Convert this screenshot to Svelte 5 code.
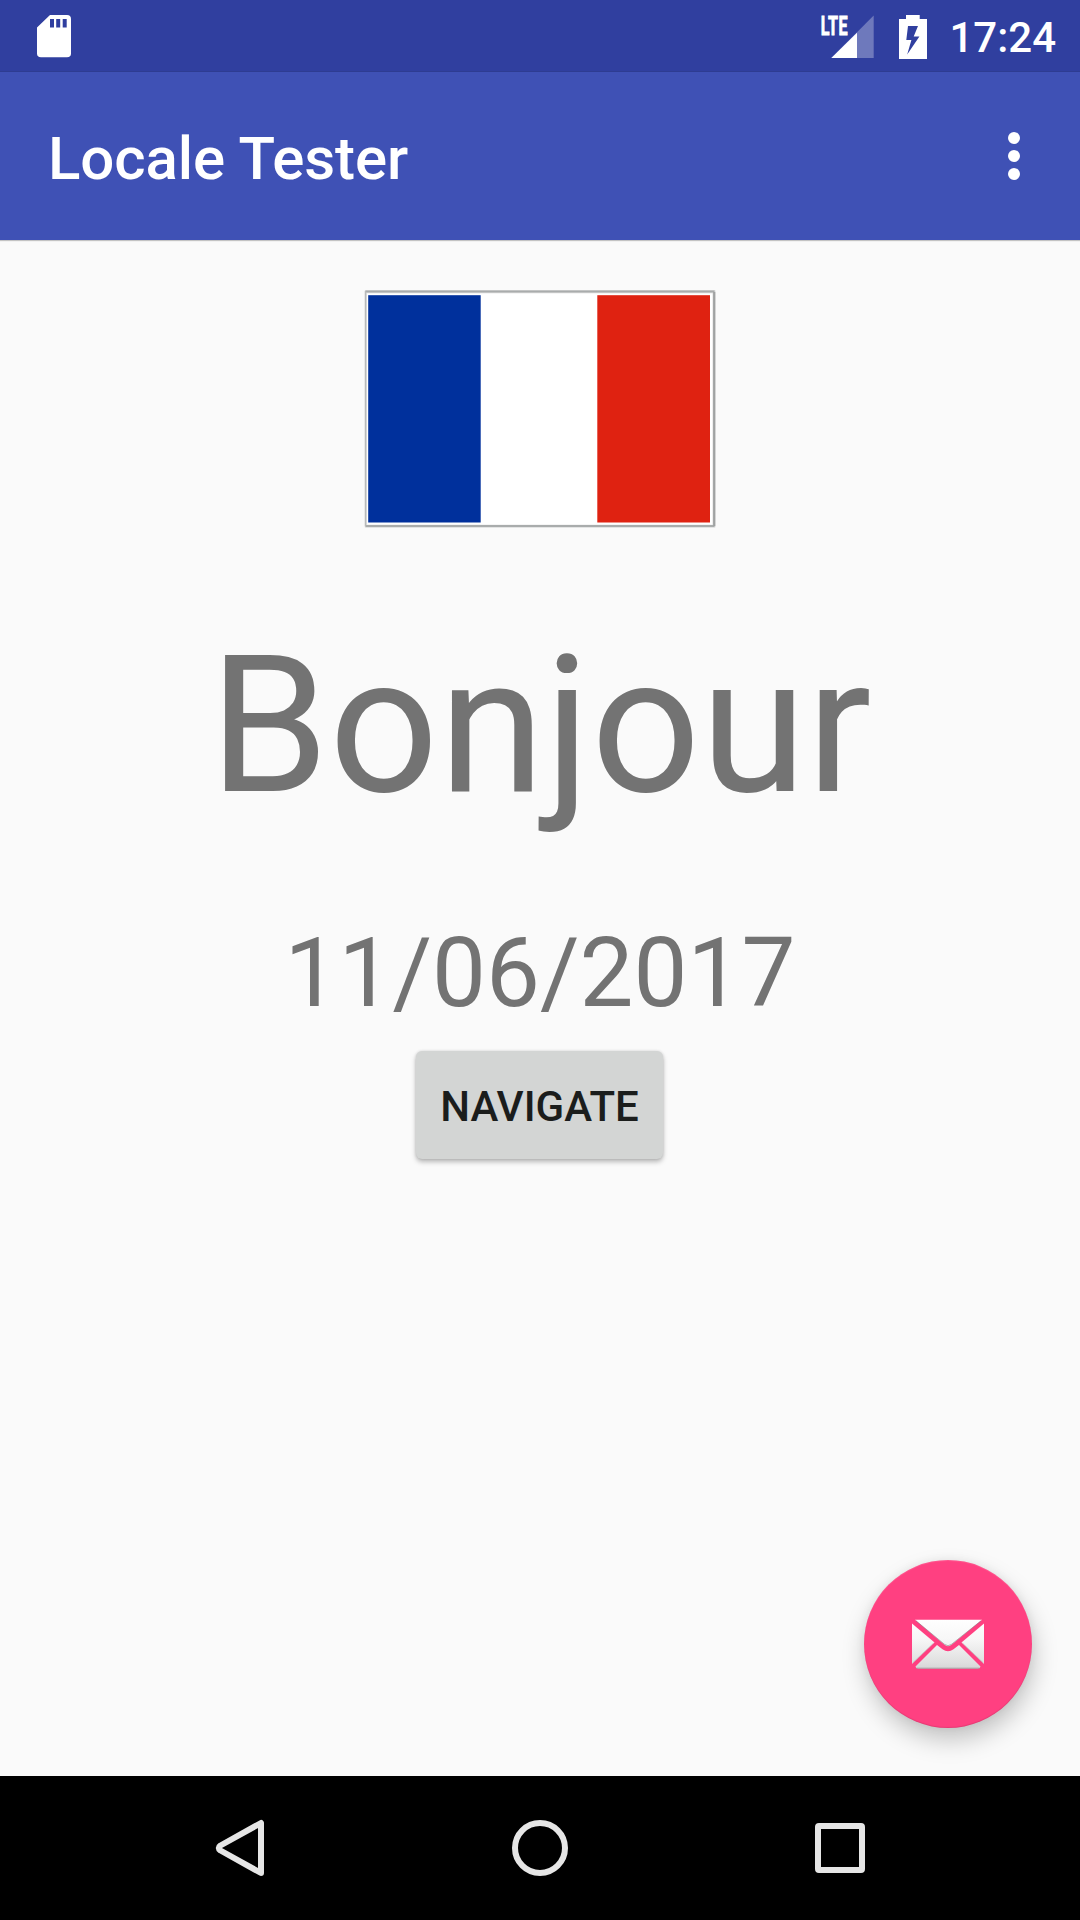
<script>
  const title = 'Locale Tester';
  const greeting = 'Bonjour';
  const date = '11/06/2017';
</script>

<div class="screen">
  <header class="status">
    <svg class="sd" width="34" height="42" viewBox="0 0 34 42" aria-hidden="true">
      <path fill="#fff" fill-rule="evenodd" d="M13 0H30Q34 0 34 4V38.500Q34 42.300 30 42.300H4Q0 42.300 0 38.500V12.500ZM13 4V12.500H17V4ZM19.200 4V12.500H23.200V4ZM25.700 4V12.500H29.700V4Z" />
    </svg>
    <div class="indicators">
      <svg class="signal" width="53" height="44" viewBox="0 0 53 44" aria-hidden="true">
        <path fill="#fff" fill-opacity=".3" d="M52.700 .5V43H10.300Z" />
        <path fill="#fff" d="M36 17.700V43H10.300Z" />
        <text class="lte" transform="translate(-.2 19.500) scale(.62 1)">LTE</text>
      </svg>
      <svg class="battery" width="28" height="44" viewBox="0 0 28 44" aria-hidden="true">
        <path fill="#fff" fill-rule="evenodd" d="M7 0H20.700V4H28V44H0V4H7ZM9 11L7.300 25H12.400L8.200 39.500L20.400 21.500H14.700L19 11Z" />
      </svg>
      <time class="clock">17:24</time>
    </div>
  </header>

  <div class="toolbar">
    <h1>{title}</h1>
    <button class="more" aria-label="More options">
      <i></i><i></i><i></i>
    </button>
  </div>

  <main>
    <svg class="flag" width="352" height="238" viewBox="0 0 352 238" role="img" aria-label="France">
      <rect x=".7" y="0" width="350.800" height="237.800" rx="1" fill="#dcdddd" />
      <path fill="none" stroke="#a9acac" stroke-width="2" d="M1.500 1.500H350.500M1.500 236H350.500" />
      <path stroke="#b8baba" stroke-width="1.300" d="M1.500 1V236" />
      <path stroke="#a0a2a2" stroke-width="2.200" d="M350.200 2V236" />
      <rect x="3" y="3.300" width="345.500" height="231.400" fill="#fff" />
      <rect x="4.200" y="5.200" width="112.500" height="227.300" fill="#00309c" />
      <rect x="233.300" y="5.200" width="112.700" height="227.300" fill="#df2211" />
    </svg>
    <p class="greeting">{greeting}</p>
    <p class="date">{date}</p>
    <button class="navigate">NAVIGATE</button>

    <button class="fab" aria-label="Send mail">
      <svg width="72" height="50" viewBox="0 0 72 50" aria-hidden="true">
        <defs>
          <linearGradient id="paper" x1="0" y1="0" x2="0" y2="50" gradientUnits="userSpaceOnUse">
            <stop offset="0" stop-color="#fff" />
            <stop offset=".4" stop-color="#f7f7f7" />
            <stop offset=".88" stop-color="#dfdfdf" />
            <stop offset="1" stop-color="#d5d5d5" />
          </linearGradient>
        </defs>
        <g fill="url(#paper)">
          <path d="M3 .8H70L39.500 25.800Q36 28.600 32.500 25.800Z" />
          <path d="M0 4.500L22.500 23.500L0 45Z" />
          <path d="M72 4.500L49.500 23.500L72 45Z" />
          <path d="M25 26L30.500 30.300Q36 34 41.500 30.300L47 26L68.500 47.500Q68 49.700 66 49.700H6Q4 49.700 3.500 47.500Z" />
        </g>
        <g fill="none" stroke="#777" stroke-opacity=".5" stroke-width="1">
          <path d="M4 1.800L32.500 25.300Q36 28.100 39.500 25.300L69 1.800" />
          <path d="M4.500 49.200H67.500" />
          <path d="M.5 44L21.500 24M71.500 44L50.500 24" stroke-opacity=".25" />
        </g>
      </svg>
    </button>
  </main>

  <nav>
    <svg width="56" height="64" viewBox="0 0 56 64" aria-label="Back">
      <path fill="none" stroke="#e6e6e6" stroke-width="6" stroke-linejoin="round" d="M49 7V57L8.500 34.500Q5 32 8.500 29.500Z" />
    </svg>
    <svg width="56" height="64" viewBox="0 0 56 64" aria-label="Home">
      <circle cx="28" cy="32" r="25" fill="none" stroke="#e6e6e6" stroke-width="6" />
    </svg>
    <svg width="56" height="64" viewBox="0 0 56 64" aria-label="Recent apps">
      <rect x="6" y="10" width="44" height="44" rx="1" fill="none" stroke="#e6e6e6" stroke-width="6" stroke-linejoin="round" />
    </svg>
  </nav>
</div>

<style>
  :global(body) {
    margin: 0;
  }
  .screen {
    width: 1080px;
    height: 1920px;
    display: flex;
    flex-direction: column;
    overflow: hidden;
    background: #fafafa;
    font-family: Roboto, sans-serif;
  }
  svg {
    display: block;
    flex: none;
    overflow: visible;
  }
  button {
    border: 0;
    padding: 0;
    font-family: inherit;
  }
  .status {
    height: 72px;
    flex: none;
    box-sizing: border-box;
    padding: 0 24px 0 37px;
    display: flex;
    justify-content: space-between;
    align-items: center;
    background: #303f9f;
    border-bottom: 1px solid #2e3c92;
    color: #fff;
  }
  .indicators {
    display: flex;
    align-items: center;
    padding-top: 2px;
  }
  .signal {
    margin-right: 25px;
  }
  .battery {
    margin-right: 22px;
  }
  .lte {
    font: 700 26px Roboto, sans-serif;
    fill: #fff;
    stroke: #fff;
    stroke-width: 0.9px;
    letter-spacing: 0.6px;
  }
  .clock {
    font-size: 42px;
    line-height: 50px;
    font-weight: 500;
    padding-top: 2px;
  }
  .toolbar {
    height: 168px;
    flex: none;
    box-sizing: border-box;
    padding: 0 60px 0 48px;
    display: flex;
    align-items: center;
    justify-content: space-between;
    background: #3f51b5;
    box-shadow: 0 1px 1px rgba(0, 0, 0, 0.22);
  }
  h1 {
    margin: 0;
    padding-top: 6px;
    font-size: 60px;
    line-height: 70px;
    font-weight: 500;
    letter-spacing: -0.08px;
    color: #fff;
  }
  .more {
    display: flex;
    flex-direction: column;
    gap: 6px;
    background: none;
  }
  .more i {
    width: 12px;
    height: 12px;
    border-radius: 50%;
    background: #fff;
  }
  main {
    flex: 1;
    position: relative;
    display: flex;
    flex-direction: column;
    align-items: center;
    padding-top: 50px;
  }
  p {
    margin: 0;
    color: #737373;
    white-space: nowrap;
  }
  .greeting {
    margin-top: 85px;
    padding-left: 1px;
    font-size: 192px;
    line-height: 225px;
    letter-spacing: 0.12px;
  }
  .date {
    margin-top: 79px;
    font-size: 96px;
    line-height: 113px;
  }
  .navigate {
    width: 247px;
    height: 108px;
    margin-top: 21px;
    margin-right: 1px;
    border-radius: 6px;
    background: #d3d5d4;
    color: #1b1d1c;
    font-size: 42px;
    font-weight: 500;
    padding-top: 3px;
    box-shadow: 0 3px 5px rgba(0, 0, 0, 0.26), 0 0 3px rgba(0, 0, 0, 0.12);
  }
  .fab {
    position: absolute;
    right: 48px;
    bottom: 48px;
    width: 168px;
    height: 168px;
    border-radius: 50%;
    display: flex;
    align-items: center;
    justify-content: center;
    background: #ff4081;
    box-shadow: 2px 12px 24px rgba(0, 0, 0, 0.22), 0 0 10px rgba(0, 0, 0, 0.06),
      inset 0 -1px 1px rgba(0, 0, 0, 0.1), inset 0 1px 1px rgba(255, 255, 255, 0.12);
  }
  nav {
    height: 144px;
    flex: none;
    box-sizing: border-box;
    padding: 0 212px;
    display: flex;
    align-items: center;
    justify-content: space-between;
    background: #000;
  }
</style>
